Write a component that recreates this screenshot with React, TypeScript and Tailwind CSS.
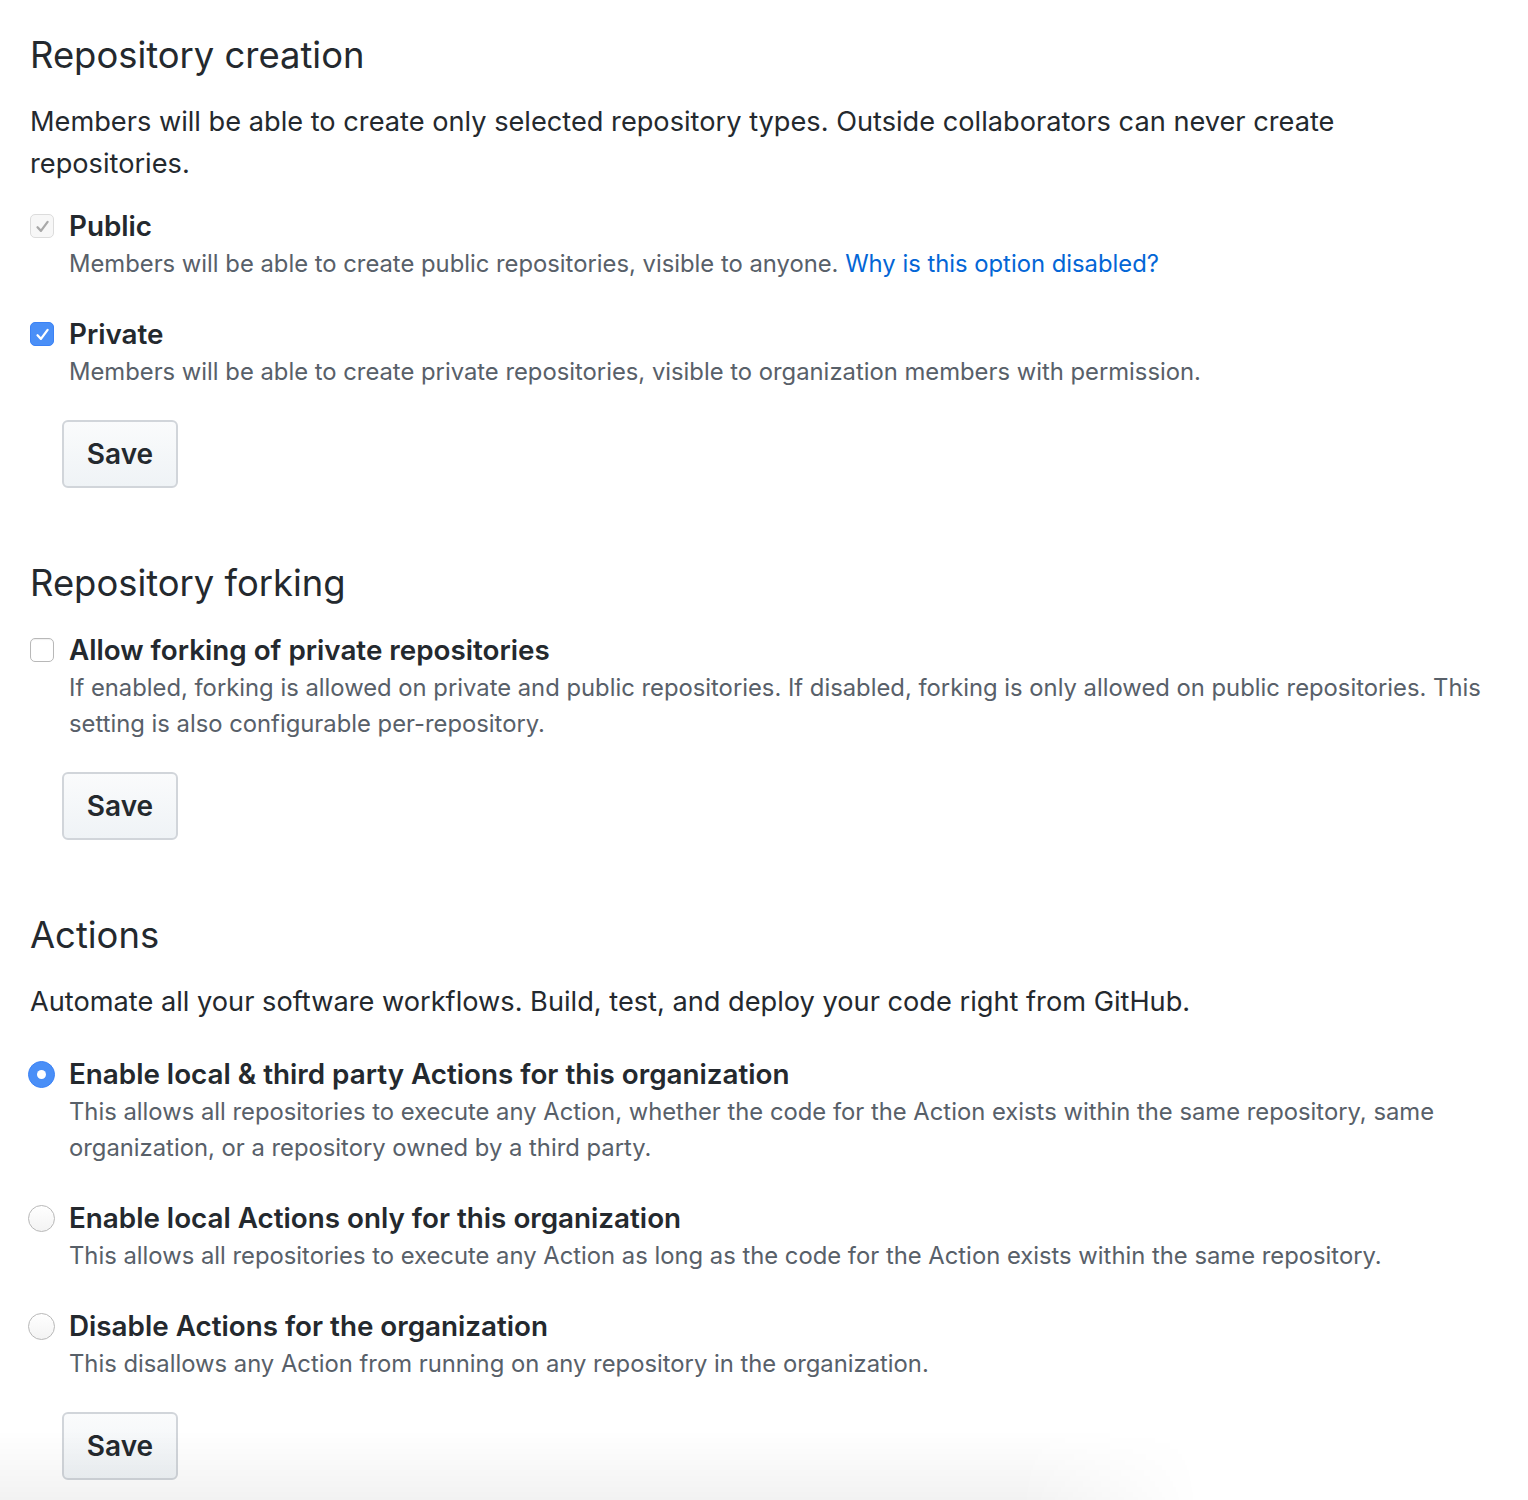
import clsx from 'clsx';

function Checkbox({ state }: { state: 'checked' | 'disabled' | 'off' }) {
  return (
    <span
      className={clsx(
        'mt-[7px] flex h-6 w-6 shrink-0 items-center justify-center rounded-[5px] border',
        state === 'checked' && 'border-[#3b82f6] bg-[#4a8ff7]',
        state === 'disabled' && 'border-[#dcdcdc] bg-[#f7f7f7]',
        state === 'off' && 'border-[#b8b8b8] bg-white shadow-[inset_0_1px_1px_rgba(0,0,0,0.06)]'
      )}
    >
      {state !== 'off' && (
        <svg viewBox="0 0 16 16" className="h-[19px] w-[19px]" fill="none">
          <path
            d="M3.8 8.6l2.9 3.1 5.6-7.6"
            stroke={state === 'checked' ? '#ffffff' : '#a8a8a8'}
            strokeWidth="1.9"
            strokeLinecap="round"
            strokeLinejoin="round"
          />
        </svg>
      )}
    </span>
  );
}

function Radio({ checked }: { checked?: boolean }) {
  return (
    <span
      className={clsx(
        '-ml-[2px] mt-[6px] flex h-[27px] w-[27px] shrink-0 items-center justify-center rounded-full border',
        checked
          ? 'border-[#3b82f6] bg-[#4a8ff7]'
          : 'border-[#b8b8b8] bg-gradient-to-b from-white to-[#f3f3f3]'
      )}
    >
      {checked && <span className="h-[9px] w-[9px] rounded-full bg-white" />}
    </span>
  );
}

function SaveButton() {
  return (
    <button className="ml-[32px] h-[68px] w-[116px] rounded-[6px] border-2 border-[#d1d5da] bg-gradient-to-b from-[#fafbfc] to-[#eff3f6] text-[28px] font-semibold text-[#24292e]">
      Save
    </button>
  );
}

function Option({
  control,
  label,
  children,
  className,
  radio,
}: {
  control: React.ReactNode;
  label: string;
  children: React.ReactNode;
  className?: string;
  radio?: boolean;
}) {
  return (
    <div className={clsx('flex items-start', radio ? 'gap-[14px]' : 'gap-[15px]', className)}>
      {control}
      <div className="flex-1">
        <p className="text-[27.8px] font-semibold leading-[38px] text-[#24292e]">{label}</p>
        <p className="mt-px text-[23.8px] leading-[36px] text-[#586069]">{children}</p>
      </div>
    </div>
  );
}

export default function App() {
  return (
    <div
      className="relative min-h-[1500px] overflow-hidden bg-white pl-[30px] pr-[38px] pt-[25px]"
      style={{ fontFamily: 'Inter, "Noto Sans", sans-serif' }}
    >
      <h2 className="text-[36.4px] font-normal leading-[60px] text-[#24292e]">Repository creation</h2>
      <p className="mt-4 text-[27.2px] leading-[42px] text-[#24292e]">
        Members will be able to create only selected repository types. Outside collaborators can never create
        repositories.
      </p>

      <Option className="mt-[22px]" control={<Checkbox state="disabled" />} label="Public">
        Members will be able to create public repositories, visible to anyone.{' '}
        <a className="text-[#0366d6]">Why is this option disabled?</a>
      </Option>
      <Option className="mt-[33px]" control={<Checkbox state="checked" />} label="Private">
        Members will be able to create private repositories, visible to organization members with permission.
      </Option>
      <div className="mt-[30px]">
        <SaveButton />
      </div>

      <h2 className="mt-[65px] text-[36.4px] font-normal leading-[60px] text-[#24292e]">Repository forking</h2>
      <Option className="mt-[18px]" control={<Checkbox state="off" />} label="Allow forking of private repositories">
        If enabled, forking is allowed on private and public repositories. If disabled, forking is only allowed on
        public repositories. This setting is also configurable per-repository.
      </Option>
      <div className="mt-[30px]">
        <SaveButton />
      </div>

      <h2 className="mt-[65px] text-[36.4px] font-normal leading-[60px] text-[#24292e]">Actions</h2>
      <p className="mt-4 text-[27.2px] leading-[42px] text-[#24292e]">
        Automate all your software workflows. Build, test, and deploy your code right from GitHub.
      </p>

      <Option
        radio
        className="mt-[32px]"
        control={<Radio checked />}
        label="Enable local & third party Actions for this organization"
      >
        This allows all repositories to execute any Action, whether the code for the Action exists within the same
        repository, same organization, or a repository owned by a third party.
      </Option>
      <Option radio className="mt-[33px]" control={<Radio />} label="Enable local Actions only for this organization">
        This allows all repositories to execute any Action as long as the code for the Action exists within the same
        repository.
      </Option>
      <Option radio className="mt-[33px]" control={<Radio />} label="Disable Actions for the organization">
        This disallows any Action from running on any repository in the organization.
      </Option>
      <div className="mt-[30px]">
        <SaveButton />
      </div>

      <div className="pointer-events-none absolute bottom-0 left-0 h-[70px] w-[1200px] bg-gradient-to-b from-transparent to-[rgba(0,0,0,0.05)] [mask-image:linear-gradient(to_right,black_85%,transparent)]" />
    </div>
  );
}
